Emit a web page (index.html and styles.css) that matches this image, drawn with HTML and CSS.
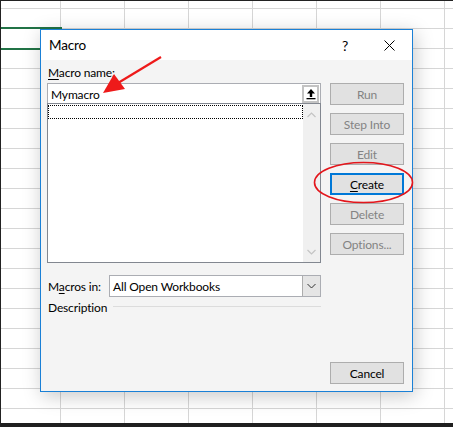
FILE: index.html
```html
<!DOCTYPE html>
<html>
<head>
<meta charset="utf-8">
<link rel="stylesheet" href="styles.css">
</head>
<body>
<div class="sheet">
  <div class="topline"></div>
  <div class="selection"></div>
  <div class="bottombar"></div>

  <div class="dialog">
    <div class="titlebar">
      <span class="title">Macro</span>
      <span class="help">?</span>
      <svg class="close" width="11" height="11" viewBox="0 0 11 11"><path d="M0.5 0.5 L10.5 10.5 M10.5 0.5 L0.5 10.5" stroke="#000" stroke-width="1" fill="none"/></svg>
    </div>
    <div class="body">
      <div class="left">
        <div class="label-name"><u>M</u>acro name:</div>
        <div class="namebox">
          <span class="nametext">Mymacro</span>
          <span class="upbtn">
            <svg width="12" height="12" viewBox="0 0 12 12"><path d="M6 1 L10 5.5 L7.2 5.5 L7.2 9 L4.8 9 L4.8 5.5 L2 5.5 Z" fill="#000"/><rect x="1.5" y="10" width="9" height="1.3" fill="#000"/></svg>
          </span>
        </div>
        <div class="list">
          <div class="listitems"><div class="focus"></div></div>
          <div class="scroll">
            <svg width="9" height="6" viewBox="0 0 9 6"><path d="M0.5 5 L4.5 1 L8.5 5" stroke="#c4c4c4" stroke-width="1.2" fill="none"/></svg>
            <svg width="9" height="6" viewBox="0 0 9 6"><path d="M0.5 1 L4.5 5 L8.5 1" stroke="#c4c4c4" stroke-width="1.2" fill="none"/></svg>
          </div>
        </div>
        <div class="inrow">
          <span class="inlabel">M<u>a</u>cros in:</span>
          <div class="select">
            <span class="seltext">All Open Workbooks</span>
            <span class="selbtn"><svg width="9" height="6" viewBox="0 0 9 6"><path d="M0.5 1 L4.5 5 L8.5 1" stroke="#333" stroke-width="1" fill="none"/></svg></span>
          </div>
        </div>
        <div class="descrow">
          <span>Description</span>
          <span class="rule"></span>
        </div>
      </div>
      <div class="right">
        <div class="btn dis">Run</div>
        <div class="btn dis">Step Into</div>
        <div class="btn dis">Edit</div>
        <div class="btn def"><u>C</u>reate</div>
        <div class="btn dis">Delete</div>
        <div class="btn dis">Options...</div>
        <div class="btn cancel">Cancel</div>
      </div>
    </div>
  </div>

  <svg class="annot" width="453" height="427" viewBox="0 0 453 427">
    <line x1="161" y1="57" x2="118" y2="83" stroke="#ee1a1a" stroke-width="2.2"/>
    <polygon points="103,93 114,74 125,89" fill="#ee1a1a"/>
    <ellipse cx="363.5" cy="182.5" rx="49" ry="20" stroke="#e3161c" stroke-width="1.6" fill="none"/>
  </svg>
</div>
</body>
</html>
```
FILE: styles.css
```css
html, body {
  margin: 0;
  padding: 0;
}
body {
  width: 453px;
  height: 427px;
  overflow: hidden;
  font-family: Lato, "Noto Sans", sans-serif;
  font-size: 12px;
  letter-spacing: -0.15px;
  color: #000;
}
.sheet {
  position: relative;
  width: 453px;
  height: 427px;
  background-color: #fff;
  background-image:
    linear-gradient(to right, #d6d6d6 1px, transparent 1px),
    linear-gradient(to bottom, #d6d6d6 1px, transparent 1px);
  background-size: 64px 20px, 64px 20px;
  background-position: 59px 0, 0 8px;
  border-left: 1px solid #222;
  box-sizing: border-box;
}
.topline {
  height: 1px;
  background: #222;
}
.selection {
  position: absolute;
  left: 0;
  top: 27px;
  width: 59px;
  height: 19px;
  border-top: 2px solid #217346;
  border-bottom: 2px solid #217346;
  border-right: 2px solid #217346;
}
.bottombar {
  position: absolute;
  left: 0;
  right: 0;
  bottom: 0;
  height: 4px;
  background: #1f1f1f;
}
.dialog {
  position: absolute;
  left: 39px;
  top: 29px;
  width: 371px;
  height: 361px;
  border: 1px solid #1a80d6;
  background: #f4f4f4;
  box-shadow: 2px 4px 18px rgba(0, 0, 0, 0.22);
  display: flex;
  flex-direction: column;
}
.titlebar {
  height: 30px;
  background: #fff;
  display: flex;
  align-items: center;
  padding-left: 8px;
  padding-right: 17px;
}
.title {
  font-size: 13.5px;
  flex: 1;
}
.help {
  font-size: 14px;
  margin-right: 36px;
}
.close {
  display: block;
}
.body {
  flex: 1;
  display: flex;
  padding: 0 6px 7px 6px;
  gap: 9px;
}
.left {
  width: 274px;
  display: flex;
  flex-direction: column;
}
.label-name {
  height: 23px;
  line-height: 14px;
  padding-top: 6px;
  padding-left: 1px;
  box-sizing: border-box;
}
u {
  text-decoration-thickness: 1px;
  text-underline-offset: 2px;
}
.namebox {
  height: 20px;
  box-sizing: border-box;
  border: 1px solid #abadb3;
  border-bottom: none;
  background: #fff;
  display: flex;
  align-items: center;
  padding-left: 3px;
  padding-right: 1px;
}
.nametext {
  flex: 1;
  padding-top: 1px;
}
.upbtn {
  width: 17px;
  height: 18px;
  box-sizing: border-box;
  border: 2px solid #c3c3c3;
  background: #fff;
  display: flex;
  align-items: center;
  justify-content: center;
  margin-top: 1px;
}
.upbtn svg {
  display: block;
}
.list {
  height: 160px;
  box-sizing: border-box;
  border: 1px solid #828790;
  background: #fff;
  display: flex;
}
.listitems {
  flex: 1;
  padding: 1px 0 0 0;
}
.focus {
  height: 14px;
  box-sizing: border-box;
  border: 1px dotted #000;
}
.scroll {
  width: 17px;
  background: #f0f0f0;
  display: flex;
  flex-direction: column;
  justify-content: space-between;
  align-items: center;
  padding: 8px 0 7px 0;
}
.scroll svg {
  display: block;
}
.inrow {
  margin-top: 12px;
  height: 22px;
  display: flex;
  align-items: center;
}
.inlabel {
  width: 62px;
  padding-left: 1px;
  box-sizing: border-box;
}
.select {
  flex: 1;
  height: 22px;
  box-sizing: border-box;
  border: 1px solid #abadb3;
  background: #fff;
  display: flex;
  align-items: center;
  padding-left: 3px;
}
.seltext {
  flex: 1;
}
.selbtn {
  width: 18px;
  height: 20px;
  box-sizing: border-box;
  background: #e5e5e5;
  border-left: 1px solid #adadad;
  display: flex;
  align-items: center;
  justify-content: center;
}
.selbtn svg {
  display: block;
}
.descrow {
  margin-top: 1px;
  height: 18px;
  display: flex;
  align-items: center;
  gap: 6px;
  padding-left: 1px;
}
.rule {
  flex: 1;
  height: 1px;
  background: #dcdcdc;
  margin-top: -1px;
}
.right {
  width: 74px;
  display: flex;
  flex-direction: column;
  gap: 8px;
  padding-top: 23px;
}
.btn {
  height: 22px;
  box-sizing: border-box;
  border: 1px solid #adadad;
  background: #e1e1e1;
  display: flex;
  align-items: center;
  justify-content: center;
}
.btn.dis {
  color: #838383;
}
.btn.def {
  border: 2px solid #0078d7;
}
.btn.cancel {
  margin-top: auto;
}
.annot {
  position: absolute;
  left: -1px;
  top: 0;
}
```
